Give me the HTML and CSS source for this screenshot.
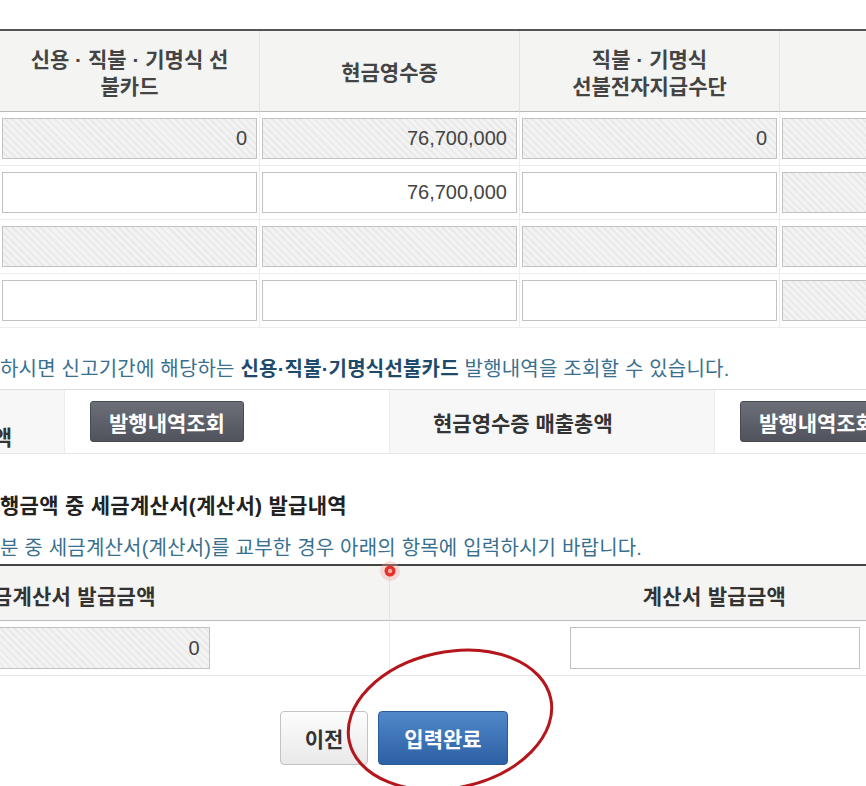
FILE: index.html
```html
<!DOCTYPE html>
<html lang="ko">

<head>
    <meta charset="utf-8">
    <title>신용카드 매출전표 등 발행금액 집계표</title>
    <link rel="stylesheet" href="styles.css">
</head>

<body>
    <div class="page">
        <table class="pay-table">
            <colgroup>
                <col><col><col><col><col>
            </colgroup>
            <thead>
                <tr>
                    <th></th>
                    <th>신용 · 직불 · 기명식 선불카드</th>
                    <th>현금영수증</th>
                    <th>직불 · 기명식<br>선불전자지급수단</th>
                    <th></th>
                </tr>
            </thead>
            <tbody>
                <tr>
                    <th></th>
                    <td><input class="ipt ro" type="text" value="0" readonly></td>
                    <td><input class="ipt ro" type="text" value="76,700,000" readonly></td>
                    <td><input class="ipt ro" type="text" value="0" readonly></td>
                    <td><input class="ipt ro" type="text" value="" readonly></td>
                </tr>
                <tr>
                    <th></th>
                    <td><input class="ipt" type="text" value=""></td>
                    <td><input class="ipt" type="text" value="76,700,000"></td>
                    <td><input class="ipt" type="text" value=""></td>
                    <td><input class="ipt ro" type="text" value="" readonly></td>
                </tr>
                <tr>
                    <th></th>
                    <td><input class="ipt ro" type="text" value="" readonly></td>
                    <td><input class="ipt ro" type="text" value="" readonly></td>
                    <td><input class="ipt ro" type="text" value="" readonly></td>
                    <td><input class="ipt ro" type="text" value="" readonly></td>
                </tr>
                <tr>
                    <th></th>
                    <td><input class="ipt" type="text" value=""></td>
                    <td><input class="ipt" type="text" value=""></td>
                    <td><input class="ipt" type="text" value=""></td>
                    <td><input class="ipt ro" type="text" value="" readonly></td>
                </tr>
            </tbody>
        </table>

        <p class="note note-top">하시면 신고기간에 해당하는 <strong>신용·직불·기명식선불카드</strong> 발행내역을 조회할 수 있습니다.</p>

        <table class="sum-table">
            <tr>
                <th class="lbl lbl-first">신용카드 등 매출총액</th>
                <td><button class="btn-query" type="button">발행내역조회</button></td>
                <th class="lbl">현금영수증 매출총액</th>
                <td><button class="btn-query" type="button">발행내역조회</button></td>
            </tr>
        </table>

        <h3 class="sub-title">행금액 중 세금계산서(계산서) 발급내역</h3>
        <p class="note note-sub">분 중 세금계산서(계산서)를 교부한 경우 아래의 항목에 입력하시기 바랍니다.</p>

        <table class="tax-table">
            <thead>
                <tr>
                    <th>세금계산서 발급금액</th>
                    <th>계산서 발급금액</th>
                </tr>
            </thead>
            <tbody>
                <tr>
                    <td><input class="ipt ro" type="text" value="0" readonly></td>
                    <td><input class="ipt" type="text" value=""></td>
                </tr>
            </tbody>
        </table>

        <div class="btn-area">
            <button class="btn-prev" type="button">이전</button>
            <button class="btn-done" type="button">입력완료</button>
        </div>
    </div>

    <!-- 화면 녹화 표시 (커서, 강조 원) -->
    <svg class="mark" width="866" height="786" viewBox="0 0 866 786">
        <circle cx="390" cy="571" r="10" fill="#f5a09a" opacity="0.35" />
        <circle cx="390" cy="571" r="5.5" fill="#e2302a" />
        <circle cx="390" cy="571" r="2.2" fill="#f7aaa4" />
        <ellipse cx="450" cy="720" rx="103" ry="68" transform="rotate(-12 450 720)" fill="none"
            stroke="#b4161c" stroke-width="3" />
    </svg>
</body>

</html>
```

FILE: styles.css
```css
* {
    margin: 0;
    padding: 0;
    box-sizing: border-box;
}

html,
body {
    width: 866px;
    height: 786px;
    overflow: hidden;
    background: #fff;
}

body {
    position: relative;
    font-family: "Liberation Sans", "Noto Sans CJK KR", sans-serif;
    font-size: 20px;
    color: #333;
}

table {
    border-collapse: separate;
    border-spacing: 0;
    table-layout: fixed;
}

.ipt {
    display: block;
    width: 100%;
    height: 41px;
    padding: 0 9px;
    border: 1px solid #c2c2c2;
    background: #fff;
    font-family: "Liberation Sans", "Noto Sans CJK KR", sans-serif;
    font-size: 20px;
    color: #444;
    text-align: right;
    outline: none;
}

.ipt.ro {
    background: repeating-linear-gradient(45deg, #f3f3f3 0, #f3f3f3 3px, #e9e9e9 3px, #e9e9e9 5px);
}

/* 상단 집계 */
.pay-table {
    width: 1300px;
    margin: 29px 0 0 -260px;
    border-top: 2px solid #555;
}

.pay-table thead th {
    height: 81px;
    padding: 3px 27px 0;
    background: #f4f4f2;
    border-right: 1px solid #e3e3e1;
    border-bottom: 1px solid #bbb;
    font-size: 21px;
    line-height: 27px;
    font-weight: bold;
    color: #444;
    text-align: center;
}

.pay-table tbody th,
.pay-table td {
    padding: 6px 2px;
    border-right: 1px solid #ececec;
    border-bottom: 1px solid #ececec;
}

.pay-table tbody th {
    background: #f4f4f2;
}

.note {
    font-size: 20px;
    line-height: 26px;
    letter-spacing: 0.2px;
    color: #38708f;
    white-space: nowrap;
}

.note strong {
    color: #1e4a6b;
}

.note-top {
    margin-top: 28px;
}

/* 발행내역조회 */
.sum-table {
    width: 1300px;
    margin: 7px 0 0 -260px;
    border-top: 1px solid #dedede;
}

.sum-table th,
.sum-table td {
    height: 64px;
    border-bottom: 1px solid #e6e6e6;
    border-right: 1px solid #ececec;
}

.sum-table td {
    padding: 0 25px;
    background: #fff;
}

.lbl {
    background: #f7f7f7;
    padding-left: 43px;
    font-size: 21px;
    font-weight: bold;
    color: #333;
    text-align: left;
    white-space: nowrap;
}

.lbl-first {
    text-align: right;
    vertical-align: bottom;
    padding: 0 52px 2px 0;
    line-height: 26px;
}

.btn-query {
    height: 41px;
    padding: 0 18px;
    border: 1px solid #474a51;
    border-radius: 3px;
    background: linear-gradient(#6c6f77, #50535b);
    font-family: "Liberation Sans", "Noto Sans CJK KR", sans-serif;
    font-size: 21px;
    font-weight: bold;
    color: #fff;
    white-space: nowrap;
}

.sub-title {
    margin-top: 38px;
    font-size: 21px;
    line-height: 28px;
    letter-spacing: 0.3px;
    font-weight: bold;
    color: #222;
    white-space: nowrap;
}

.note-sub {
    margin-top: 15px;
}

/* 세금계산서 */
.tax-table {
    width: 1300px;
    margin: 3px 0 0 -260px;
    border-top: 2px solid #444;
}

.tax-table th {
    height: 55px;
    padding-top: 3px;
    background: #f4f4f2;
    border-bottom: 1px solid #bbb;
    border-right: 1px solid #e3e3e1;
    font-size: 21px;
    letter-spacing: 0.3px;
    font-weight: bold;
    color: #333;
}

.tax-table td {
    padding: 6px 0;
    border-bottom: 1px solid #e6e6e6;
    border-right: 1px solid #ececec;
}

.tax-table .ipt {
    width: 290px;
    height: 42px;
    margin: 0 auto;
}

.btn-area {
    width: 1308px;
    margin: 35px 0 0 -260px;
    display: flex;
    justify-content: center;
    gap: 10px;
}

.btn-prev,
.btn-done {
    height: 54px;
    border-radius: 4px;
    font-family: "Liberation Sans", "Noto Sans CJK KR", sans-serif;
    font-size: 21px;
    font-weight: bold;
}

.btn-prev {
    width: 88px;
    border: 1px solid #c3c3c3;
    background: linear-gradient(#fdfdfd, #e9e9e9);
    color: #333;
}

.btn-done {
    width: 130px;
    border: 1px solid #2a5b9b;
    background: linear-gradient(#5088c9, #2c60a4);
    color: #fff;
}

.mark {
    position: absolute;
    left: 0;
    top: 0;
    pointer-events: none;
}
```
